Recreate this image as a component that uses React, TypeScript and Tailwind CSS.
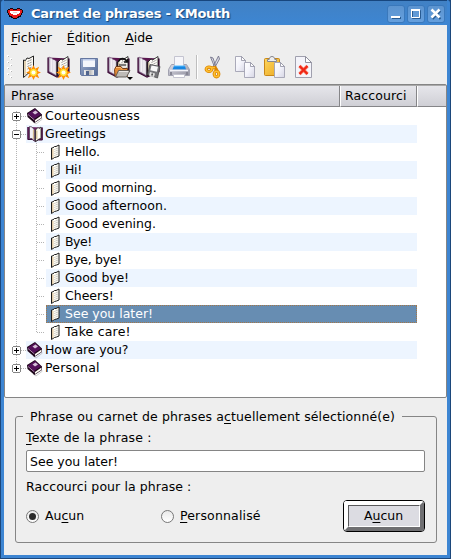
import React from "react";

const FONT = "font-['DejaVu_Sans',sans-serif]";

function MouthLogo() {
  return (
    <svg width="16" height="11" viewBox="0 0 16 11" shapeRendering="crispEdges" className="shrink-0">
      <path d="M3 0h3v1h4V0h3v1h2v1h1v3h-1v2h-1v2h-2v1h-2v1H6v-1H4V9H2V7H1V5H0V2h1V1h2z" fill="#16050a" />
      <path d="M3 1h3v1h4V1h3v1h2v3h-1v2h-1v1h-2v1h-1v1H6V9H5V8H3V7H2V5H1V2h2z" fill="#ea1c1c" />
      <path d="M3 3h10v2h-1v1h-2v1H6V6H4V5H3z" fill="#fff" />
      <path d="M6 4h4v1H6z" fill="#f1c8c8" />
    </svg>
  );
}

function TitleButton({ children }: { children: React.ReactNode }) {
  return (
    <div className="h-[18px] w-[18px] rounded-[3px] border border-[#3a78bb] bg-gradient-to-b from-[#5c94d0] to-[#659fdd]">
      <svg width="16" height="16" viewBox="0 0 16 16" fill="none">
        {children}
      </svg>
    </div>
  );
}

function Spark({ x, y }: { x: number; y: number }) {
  return (
    <g transform={`translate(${x} ${y})`}>
      <path d="M0-6L1.4-3 4.5-4.5 3.2-1.3 6 0 3.2 1.3 4.5 4.5 1.4 3 0 6-1.4 3-4.5 4.5-3.2 1.3-6 0-3.2-1.3-4.5-4.5-1.4-3z" fill="#ffb000" stroke="#ff8c00" strokeWidth="1.2" />
      <circle r="3.4" fill="#ffe53a" />
      <circle r="2" fill="#fffff4" />
    </g>
  );
}

function OpenBook() {
  return (
    <g>
      <path d="M1.5 1.5v15l9 4.5 12-5.5V2.5" stroke="#3b0d36" strokeWidth="1.2" fill="#5a164f" />
      <path d="M2.5 1l8 4.5V20l-8-4.5z" fill="#dcd7e2" stroke="#77607c" strokeWidth=".7" />
      <path d="M5 2.6v13.2M7.5 4v13" stroke="#f4f0f4" strokeWidth="1.3" />
      <path d="M10.5 5.5V20" stroke="#120a10" strokeWidth="1.2" />
      <path d="M11.5 6l3-3 1.5 1L21.500.5V14l-5 1.500-5 4z" fill="#fcfaf5" stroke="#111" strokeWidth=".8" />
      <path d="M12.5 6.5V18" stroke="#cdb890" strokeWidth="1.2" />
      <path d="M15 6.500l5-2.500M15 9l5-2.500M15 11.500l5-2.500M15 14l5-2.500" stroke="#777" strokeWidth=".8" strokeDasharray="1.500 .7" fill="none" />
    </g>
  );
}

function Sheet({ id }: { id: string }) {
  return (
    <g>
      <defs>
        <linearGradient id={id} x2="1" y2="1">
          <stop stopColor="#fff" />
          <stop offset=".5" stopColor="#f2f2fa" />
          <stop offset="1" stopColor="#d6d6e4" />
        </linearGradient>
      </defs>
      <path d="M.5.5h6l4 4v11H.5z" fill={`url(#${id})`} stroke="#a2a2b2" strokeWidth=".9" />
      <path d="M6.5.5v4h4z" fill="#fff" stroke="#8e8e9e" strokeWidth=".8" />
    </g>
  );
}

function ToolButton({ children, label }: { children: React.ReactNode; label: string }) {
  return (
    <button aria-label={label} className="h-[30px] w-[30px] shrink-0">
      <svg width="30" height="30" viewBox="0 0 30 30" fill="none">
        {children}
      </svg>
    </button>
  );
}

function Toolbar() {
  return (
    <div className="flex h-[34px] items-start pt-[2px]">
      <svg width="12" height="30" viewBox="0 0 12 30" className="shrink-0">
        {[3, 9, 15, 21].map((y) => (
          <g key={y}>
            <path d={`M3 ${y}h2v2H3zM6 ${y + 3}h2v2H6z`} fill="#fff" />
            <path d={`M4 ${y + 1}h1v1H4zM7 ${y + 4}h1v1H7z`} fill="#b4b4b4" />
          </g>
        ))}
      </svg>
      <ToolButton label="Nouvelle phrase">
        <path d="M7.500 8l2 .5L11 6l2 .5L17.500 4v16l-5.500 1.500-4.500 4z" fill="#faf8f2" stroke="#222" />
        <path d="M9 9v14.500" stroke="#d8c49c" strokeWidth="1.500" />
        <path d="M11.500 9.500l4.500-2M11.500 12l4.500-2M11.500 14.500l4.500-2M11.500 17l4.500-2" stroke="#777" strokeWidth=".9" strokeDasharray="1.500 .7" />
        <Spark x={17.5} y={20.5} />
      </ToolButton>
      <ToolButton label="Nouveau carnet">
        <g transform="translate(.5 4)"><OpenBook /></g>
        <Spark x={17.5} y={20.5} />
      </ToolButton>
      <ToolButton label="Enregistrer">
        <defs>
          <linearGradient id="disk" x2="1" y2="1"><stop stopColor="#9eafd0" /><stop offset="1" stopColor="#536994" /></linearGradient>
          <linearGradient id="metal" x2="1"><stop stopColor="#eee" /><stop offset=".6" stopColor="#bbb" /><stop offset="1" stopColor="#eee" /></linearGradient>
        </defs>
        <path d="M4.500 6.500h17v17h-16l-1-1z" fill="url(#disk)" stroke="#6577a0" />
        <path d="M7 7h12v8H7z" fill="#f4f6fc" />
        <path d="M7 7h12v1.500H7z" fill="#bdcbe9" />
        <path d="M8 18h10v5H8z" fill="url(#metal)" />
        <path d="M10 19h3v4h-3z" fill="#52658d" />
      </ToolButton>
      <ToolButton label="Ouvrir">
        <g transform="translate(.5 4)"><OpenBook /></g>
        <path d="M12.500 9.500c2-4 6-4 8.500 0M21.500 7v3h-3.500" stroke="#111" strokeWidth="1.500" />
        <path d="M14 11h6v5h-6z" fill="#e8e4df" />
        <path d="M13 13h7" stroke="#111" />
        <path d="M8.500 17.500l1.500-3h5l1.500 2h5v8H9z" fill="#e38a36" stroke="#69320d" strokeWidth=".9" />
        <path d="M10 15.500h4.500l1.500 2" stroke="#ffbf7a" />
        <path d="M12.500 18.500H24L20.500 25h-11z" fill="#bdbab6" stroke="#5b5752" strokeWidth=".9" />
        <path d="M13 19.500h9" stroke="#e9e7e4" />
        <path d="M21 25h6l-3 3z" fill="#000" />
      </ToolButton>
      <ToolButton label="Enregistrer le carnet">
        <g transform="translate(.5 4)"><OpenBook /></g>
        <path d="M14 12.500l10 2-2.500 11.500-10-3.500z" fill="#76767a" stroke="#4c4c4e" strokeWidth=".8" />
        <path d="M15.500 13.500l6.500 1.300-1.200 5-6.500-1.500z" fill="#f9f9f9" />
        <path d="M14 20l5 1.500-1 3.500-5-1.500z" fill="#e5e5e5" />
        <path d="M16.500 21.500l-.7 2" stroke="#444" strokeWidth="1.500" />
      </ToolButton>
      <ToolButton label="Imprimer">
        <defs><linearGradient id="printer" y2="1"><stop stopColor="#dddde7" /><stop offset="1" stopColor="#9292a0" /></linearGradient></defs>
        <path d="M5.500 12.500l-3 5v6h21v-6l-3-5z" fill="url(#printer)" stroke="#a2a2b0" />
        <path d="M8.500 4.500h9v11h-9z" fill="#f6f6fa" stroke="#c4c4d0" />
        <path d="M8 14h11l1 3.500H6.500z" fill="#1887e2" />
        <path d="M8 14h11" stroke="#55bcff" />
        <path d="M4 18.500h18" stroke="#f3f3f8" strokeWidth="1.500" />
        <path d="M7.500 22.500h11v3h-11z" fill="#fff" stroke="#c4c4d0" />
        <path d="M5 20v3M21 20v3" stroke="#858593" strokeWidth="2" />
      </ToolButton>
      <div className="mt-[3px] h-6 w-1 shrink-0 border-l border-[#bebebe]"><div className="h-full w-px bg-white" /></div>
      <ToolButton label="Couper">
        <path d="M10.500 5l4.500 11 1-1-3-9zM18.500 4l-5 10 1 2 5-9z" fill="#dcdce6" stroke="#74748a" strokeWidth=".9" />
        <g stroke="#d98404" strokeWidth="3.200"><ellipse cx="9" cy="17.300" rx="2.800" ry="2.200" /><ellipse cx="16.500" cy="22" rx="2.300" ry="2.800" /><path d="M11 16l4-.5 2 3" /></g>
        <g stroke="#ffc030" strokeWidth="1.500"><ellipse cx="9" cy="17.300" rx="2.800" ry="2.200" /><ellipse cx="16.500" cy="22" rx="2.300" ry="2.800" /><path d="M11 16l4-.5" /></g>
      </ToolButton>
      <ToolButton label="Copier">
        <g transform="translate(5 4)"><Sheet id="copyBack" /></g>
        <g transform="translate(14 10)"><Sheet id="copyFront" /></g>
      </ToolButton>
      <ToolButton label="Coller">
        <defs><linearGradient id="clip" y2="1"><stop stopColor="#ffd65c" /><stop offset="1" stopColor="#eaa924" /></linearGradient></defs>
        <rect x="4.500" y="6.500" width="15" height="17" rx="1" fill="url(#clip)" stroke="#c88718" />
        <path d="M7.500 9.500v-2h1.700c0-4 5.600-4 5.600 0h1.700v2z" fill="#eee" stroke="#888890" />
        <g transform="translate(14 10)"><Sheet id="pasteSheet" /></g>
      </ToolButton>
      <ToolButton label="Effacer">
        <path d="M5.500 4.500h10l6 6v15h-16z" fill="#f4f4fa" stroke="#a0a0ae" />
        <path d="M15.500 4.500v6h6z" fill="#fff" stroke="#90909e" />
        <path d="M9.500 14l8 8M17.500 14l-8 8" stroke="#ff7a60" strokeWidth="3.200" />
        <path d="M9.500 14l8 8M17.500 14l-8 8" stroke="#ee2718" strokeWidth="2" />
      </ToolButton>
    </div>
  );
}

function ClosedBookIcon() {
  return (
    <svg width="17" height="18" viewBox="0 0 17 18" className="shrink-0">
      <path d="M6 15l3 2 6.500-5" stroke="#999" opacity=".5" fill="none" />
      <path d="M0 6l8-5 7 6.500V11l-7.500 5L.5 10z" fill="#1d0619" />
      <path d="M1 6.500L8 2l6 5.500-7 4.500z" fill="#54105a" />
      <path d="M1 7.500l6.500 5.500" stroke="#c495c6" strokeWidth=".9" />
      <path d="M8 13l6.500-4.500v2.300L8 15z" fill="#fffdf5" />
      <path d="M5.500 5.500L8.500 3.500l2.500 2-3 2z" fill="#d6c0d8" />
    </svg>
  );
}

function OpenBookIcon() {
  return (
    <svg width="17" height="18" viewBox="0 0 17 18" fill="none" className="shrink-0">
      <path d="M.8 2v12.500h4.500l3 2 3-1.500h4V2.500" fill="#6a2160" stroke="#3b0d36" strokeWidth="1" />
      <path d="M2.500 1.500l2.500.5 2.500 3v11L5 13.500H2.500z" fill="#f1eff4" stroke="#55405a" strokeWidth=".8" />
      <path d="M8.500 5L11 2.500l1 1L14 2v11.500L12 14l-3.500 2.500z" fill="#fffdf4" stroke="#222" strokeWidth=".8" />
      <path d="M6.500 5v9M9.800 5.500V14" stroke="#d0b88c" strokeWidth="1.200" />
    </svg>
  );
}

function PhraseIcon() {
  return (
    <svg width="15" height="18" viewBox="0 0 15 18" fill="none" className="shrink-0">
      <path d="M4.500 5l1.500-.2L7.500 3.500l1.500 0 3-1.500v11L9.500 14l-2 .5-3 2z" fill="#fffdf4" stroke="#1a1a1a" />
      <path d="M5.800 6v9" stroke="#e0c8a2" strokeWidth="1.400" />
      <path d="M7.500 6.500l3.500-1.500M7.500 8.500l3.500-1.500M7.500 10.500l3.500-1.500M7.500 12.500l3.500-1.500" stroke="#999" strokeWidth=".7" strokeDasharray="1 .5" />
    </svg>
  );
}

type Row = { text: string; kind: "closed" | "open" | "phrase"; last?: boolean; tracking?: string };

const rows: Row[] = [
  { text: "Courteousness", kind: "closed", tracking: "tracking-[0.16px]" },
  { text: "Greetings", kind: "open" },
  { text: "Hello.", kind: "phrase", tracking: "tracking-[-0.1px]" },
  { text: "Hi!", kind: "phrase", tracking: "tracking-[-0.3px]" },
  { text: "Good morning.", kind: "phrase", tracking: "tracking-[-0.1px]" },
  { text: "Good afternoon.", kind: "phrase", tracking: "tracking-[0.04px]" },
  { text: "Good evening.", kind: "phrase" },
  { text: "Bye!", kind: "phrase", tracking: "tracking-[-0.5px]" },
  { text: "Bye, bye!", kind: "phrase", tracking: "tracking-[-0.3px]" },
  { text: "Good bye!", kind: "phrase", tracking: "tracking-[-0.1px]" },
  { text: "Cheers!", kind: "phrase" },
  { text: "See you later!", kind: "phrase" },
  { text: "Take care!", kind: "phrase", last: true, tracking: "tracking-[0.2px]" },
  { text: "How are you?", kind: "closed", tracking: "tracking-[-0.16px]" },
  { text: "Personal", kind: "closed", last: true, tracking: "tracking-[0.2px]" },
];

function Branch({ row, first }: { row: Row; first: boolean }) {
  const child = row.kind === "phrase";
  return (
    <svg width={child ? 40 : 20} height="18" viewBox={child ? "0 0 40 18" : "0 0 20 18"} fill="none" className="shrink-0" shapeRendering="crispEdges">
      <g stroke="#b4b4b4" strokeDasharray="1 1">
        <path d={`M10.500 ${first ? 4 : 0}V${!child && row.last ? 9 : 18}`} />
        {child ? <path d={`M30.500 0V${row.last ? 9 : 18}M31 9.500h8`} /> : <path d="M15 9.500h5" />}
      </g>
      {!child && (
        <g>
          <path d="M7 5h7v1h1v7h-1v1H7v-1H6V6h1z" fill="#858585" />
          <path d="M7 6h7v7H7z" fill="#fff" />
          <path d="M8 9.500h5" stroke="#000" />
          {row.kind === "closed" && <path d="M10.500 7v5" stroke="#000" />}
        </g>
      )}
    </svg>
  );
}

function TreeRow({ row, index }: { row: Row; index: number }) {
  const selected = index === 11;
  const tone = selected
    ? "bg-[#678db2] text-white outline-1 -outline-offset-1 outline-dotted outline-[#a47748]"
    : index % 2 ? "bg-[#edf5ff]" : "";
  return (
    <div className="flex h-[18px] w-[411px]">
      <Branch row={row} first={index === 0} />
      <div className={`flex min-w-0 flex-1 items-center pl-[1px] ${tone}`}>
        {row.kind === "closed" && <ClosedBookIcon />}
        {row.kind === "open" && <OpenBookIcon />}
        {row.kind === "phrase" && <PhraseIcon />}
        <span className={`${row.kind === "phrase" ? "ml-[3px]" : "ml-[1px]"} whitespace-nowrap leading-[18px] ${row.tracking ?? ""}`}>{row.text}</span>
      </div>
    </div>
  );
}

function HeaderCell({ label, className }: { label: string; className: string }) {
  return (
    <div className={`h-[21px] border-b border-[#858588] bg-gradient-to-b from-[#e6e6eb] to-[#cfcfd5] leading-[19px] tracking-[0.12px] ${className}`}>{label}</div>
  );
}

function Radio({ checked }: { checked?: boolean }) {
  return (
    <span className="flex h-[13px] w-[13px] items-center justify-center rounded-full border border-[#777] bg-gradient-to-b from-[#e9e9e9] to-white">
      {checked && <span className="h-[7px] w-[7px] rounded-full bg-[#2b2b2b]" />}
    </span>
  );
}

function Key({ children }: { children: React.ReactNode }) {
  return <span className="underline decoration-1 underline-offset-2">{children}</span>;
}

export default function App() {
  return (
    <div className={`h-[559px] w-[451px] overflow-hidden bg-[#1c477b] pl-px pr-px text-[12.5px] text-black ${FONT}`}>
      <div className="h-[558px] rounded-t-[3px] bg-[#3d85d2] px-[3px]">
        <header className="flex h-[25px] items-center border-t border-[#17467e] bg-gradient-to-b from-[#4181c4] to-[#3d86d3] pl-[3px] pr-[2px]">
          <MouthLogo />
          <h1 className="ml-2 flex-1 whitespace-nowrap pt-[2px] text-[13px] font-bold tracking-[-0.24px] text-white [text-shadow:1px_1px_1px_#174578]">Carnet de phrases - KMouth</h1>
          <div className="flex gap-[2px] pt-[2px]">
            <TitleButton><path d="M4 12h9" stroke="#285b92" strokeWidth="2" /><path d="M3 11h9" stroke="#fff" strokeWidth="2" /></TitleButton>
            <TitleButton><path d="M4.500 4.500h8v8h-8z" stroke="#285b92" /><path d="M3.500 3.500h8v8h-8z" stroke="#fff" /><path d="M3 4h9" stroke="#fff" strokeWidth="2" /></TitleButton>
            <TitleButton><path d="M4.500 5l8 8M12.500 5l-8 8" stroke="#285b92" strokeWidth="2" /><path d="M3.500 3.500l8 8M11.500 3.500l-8 8" stroke="#fff" strokeWidth="2.500" /></TitleButton>
          </div>
        </header>
        <main className="h-[530px] bg-[#eee]">
          <nav className="flex h-[25px] gap-[15px] pl-[7px] leading-[25px]">
            <span><Key>F</Key>ichier</span><span><Key>É</Key>dition</span><span><Key>A</Key>ide</span>
          </nav>
          <Toolbar />
          <section className="h-[314px] w-[443px] rounded-[2px] border border-[#858585] bg-white">
            <div className="flex border-t border-[#aaa]">
              <HeaderCell label="Phrase" className="w-[335px] border-r border-r-[#858588] pl-[6px]" />
              <HeaderCell label="Raccourci" className="w-[77px] border-l border-r border-l-white border-r-[#858588] pl-1" />
              <HeaderCell label="" className="flex-1 border-l border-l-white" />
            </div>
            <div className="w-[412px] pl-px">
              {rows.map((row, i) => <TreeRow key={row.text} row={row} index={i} />)}
            </div>
          </section>
          <fieldset className="ml-[11px] mt-[10px] h-[135px] w-[422px] rounded-[3px] border border-[#858585] pl-[10px]">
            <legend className="-ml-[3px] h-[17px] whitespace-nowrap px-[7px] leading-[17px] tracking-[0.12px]">Phrase ou carnet de phrases a<Key>c</Key>tuellement sélectionné(e)</legend>
            <label className="block h-[25px] leading-[25px] tracking-[0.14px]"><Key>T</Key>exte de la phrase :</label>
            <div className="h-[22px] w-[399px] rounded-[2px] border border-[#858585] bg-white pl-[3px] leading-[22px]">See you later!</div>
            <div className="h-7 leading-[29px] tracking-[0.08px]">Raccourci pour la phrase :</div>
            <div className="flex h-8 w-[399px] items-center">
              <label className="flex w-[135px] items-center gap-[6px]"><Radio checked /><span>Au<Key>c</Key>un</span></label>
              <label className="flex flex-1 items-center gap-[6px] tracking-[0.16px]"><Radio /><span><Key>P</Key>ersonnalisé</span></label>
              <button className="h-8 w-[82px] rounded-[4px] border border-black">
                <span className="block h-[30px] w-20 rounded-[3px] border-4 border-b-[#6f6f72] border-l-white border-r-[#6f6f72] border-t-white">
                  <span className="block h-[22px] border border-b-white border-l-[#58585a] border-r-white border-t-[#58585a] bg-[#dcdce2] pr-px leading-[20px]">A<Key>u</Key>cun</span>
                </span>
              </button>
            </div>
          </fieldset>
        </main>
      </div>
    </div>
  );
}
